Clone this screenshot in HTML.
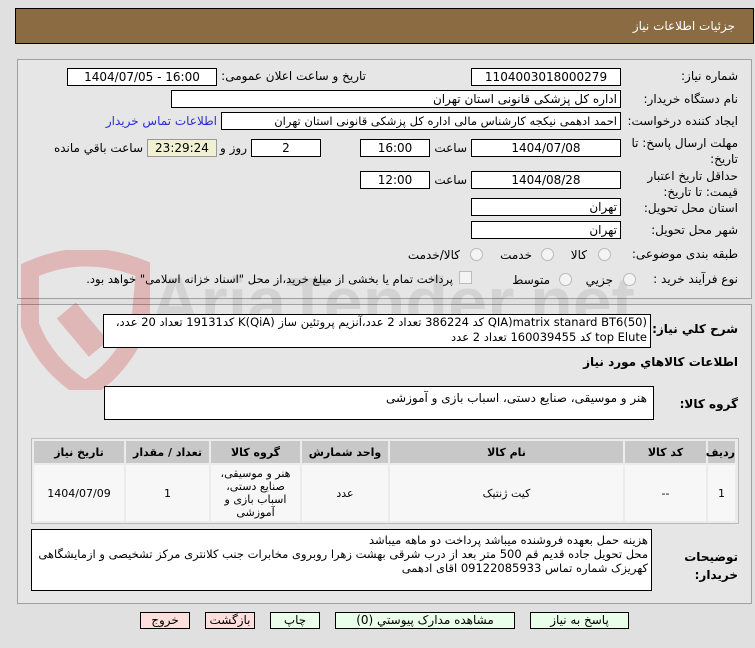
<!DOCTYPE html>
<html><head><meta charset="utf-8"><style>
body{margin:0;width:755px;height:648px;background:#e0e0e0;font-family:"DejaVu Sans",Tahoma,sans-serif;font-size:12px;color:#000;position:relative;overflow:hidden}
.a{position:absolute}
.hdr{left:15px;top:8px;width:737px;height:34px;background:#8b6b42;border:1px solid #000}
.hdr span{position:absolute;right:18px;top:10px;color:#fff;font-size:12px}
.pn{border:1px solid #a0a0a0;background:#e6e6e6}
.bx{position:absolute;background:#fff;border:1px solid #000;box-sizing:border-box;font-size:12px;line-height:16px;text-align:center;direction:ltr}
.r{text-align:right;direction:rtl;padding-right:3px}
.lb{position:absolute;direction:rtl;text-align:right;font-size:12px;white-space:nowrap}
.rad{position:absolute;width:11px;height:11px;border:1px solid #bbb;border-radius:50%;background:#f4f4f4}
table{border-collapse:separate;border-spacing:2px;font-size:11px;table-layout:fixed}
td,th{text-align:center;direction:rtl;padding:0}
th{background:#c8c8c8;height:22px;font-weight:bold}
td{background:#f7f7f7;height:56px;line-height:13px}
.bt{position:absolute;top:612px;height:17px;box-sizing:border-box;border:1px solid #000;font-size:12px;line-height:15px;text-align:center;direction:rtl}
.g{background:#eaffea}.p{background:#ffdede}
</style></head><body>
<div class="a hdr"><span>جزئیات اطلاعات نیاز</span></div>

<div class="a pn" style="left:17px;top:59px;width:733px;height:238px"></div>
<div class="a pn" style="left:17px;top:304px;width:733px;height:298px"></div>

<svg class="a" style="left:20px;top:250px;opacity:.2" width="130" height="140" viewBox="0 0 130 140"><path d="M10 20 Q65 -5 125 20 L120 75 Q100 120 65 140 Q25 115 10 75 Z" fill="none" stroke="#c00" stroke-width="18"/><rect x="50" y="55" width="25" height="50" fill="#c00" transform="rotate(-40 62 80)"/></svg>
<div class="a" style="left:150px;top:262px;font-size:70px;font-weight:bold;color:#000;opacity:.08;font-family:'Liberation Sans',sans-serif">AriaTender.net</div>

<div class="lb" style="right:17px;top:69px">شماره نیاز:</div>
<div class="bx" style="left:471px;top:68px;width:150px;height:18px">1104003018000279</div>
<div class="lb" style="right:389px;top:69px">تاریخ و ساعت اعلان عمومی:</div>
<div class="bx" style="left:67px;top:68px;width:150px;height:18px">1404/07/05 - 16:00</div>

<div class="lb" style="right:17px;top:92px">نام دستگاه خریدار:</div>
<div class="bx r" style="left:171px;top:90px;width:450px;height:18px">اداره کل پزشکی قانونی استان تهران</div>

<div class="lb" style="right:17px;top:114px">ایجاد کننده درخواست:</div>
<div class="bx r" style="left:221px;top:112px;width:400px;height:18px;font-size:11.5px">احمد ادهمی نیکجه کارشناس مالی اداره کل پزشکی قانونی استان تهران</div>
<div class="lb" style="right:538px;top:114px;color:#2a2ad8">اطلاعات تماس خریدار</div>

<div class="lb" style="right:17px;top:135px;line-height:16px">مهلت ارسال پاسخ: تا<br>تاریخ:</div>
<div class="bx" style="left:471px;top:139px;width:150px;height:18px">1404/07/08</div>
<div class="lb" style="right:288px;top:141px">ساعت</div>
<div class="bx" style="left:360px;top:139px;width:70px;height:18px">16:00</div>
<div class="bx" style="left:251px;top:139px;width:70px;height:18px">2</div>
<div class="lb" style="right:508px;top:141px">روز و</div>
<div class="bx" style="left:147px;top:139px;width:70px;height:18px;background:#f1f0d2;border-color:#999">23:29:24</div>
<div class="lb" style="right:612px;top:141px">ساعت باقي مانده</div>

<div class="lb" style="right:17px;top:168px;line-height:16px">حداقل تاریخ اعتبار<br>قیمت: تا تاریخ:</div>
<div class="bx" style="left:471px;top:171px;width:150px;height:18px">1404/08/28</div>
<div class="lb" style="right:288px;top:173px">ساعت</div>
<div class="bx" style="left:360px;top:171px;width:70px;height:18px">12:00</div>

<div class="lb" style="right:17px;top:201px">استان محل تحویل:</div>
<div class="bx r" style="left:471px;top:198px;width:150px;height:18px">تهران</div>
<div class="lb" style="right:17px;top:223px">شهر محل تحویل:</div>
<div class="bx r" style="left:471px;top:221px;width:150px;height:18px">تهران</div>

<div class="lb" style="right:17px;top:247px">طبقه بندی موضوعی:</div>
<div class="rad" style="left:598px;top:248px"></div><div class="lb" style="right:168px;top:248px">کالا</div>
<div class="rad" style="left:541px;top:248px"></div><div class="lb" style="right:223px;top:248px">خدمت</div>
<div class="rad" style="left:470px;top:248px"></div><div class="lb" style="right:295px;top:248px">کالا/خدمت</div>

<div class="lb" style="right:17px;top:272px">نوع فرآیند خرید :</div>
<div class="rad" style="left:623px;top:273px"></div><div class="lb" style="right:142px;top:273px">جزیي</div>
<div class="rad" style="left:559px;top:273px"></div><div class="lb" style="right:205px;top:273px">متوسط</div>
<div class="a" style="left:459px;top:271px;width:11px;height:11px;border:1px solid #bbb;background:#f4f4f4"></div>
<div class="lb" style="right:302px;top:272px;font-size:11.5px">پرداخت تمام یا بخشی از مبلغ خرید،از محل "اسناد خزانه اسلامی" خواهد بود.</div>

<div class="lb" style="right:17px;top:322px;font-weight:bold">شرح کلي نیاز:</div>
<div class="bx r" style="left:103px;top:314px;width:548px;height:34px;line-height:15px;font-size:11.5px;background:#fff">(50)QIA)matrix stanard BT6 کد 386224 تعداد 2 عدد،آنزیم پروتئین ساز K(QiA) کد19131 تعداد 20 عدد، top Elute کد 160039455 تعداد 2 عدد</div>

<div class="lb" style="right:17px;top:355px;font-weight:bold">اطلاعات کالاهاي مورد نیاز</div>

<div class="lb" style="right:17px;top:397px;font-weight:bold">گروه کالا:</div>
<div class="bx r" style="left:104px;top:386px;width:550px;height:34px;padding-right:6px;padding-top:3px">هنر و موسیقی، صنایع دستی، اسباب بازی و آموزشی</div>

<div class="a" style="left:31px;top:438px;width:706px;height:84px;border:1px solid #bbb;background:#ececec">
<table style="width:705px;direction:rtl;margin:0">
<tr><th style="width:27px">ردیف</th><th style="width:81px">کد کالا</th><th style="width:233px">نام کالا</th><th style="width:86px">واحد شمارش</th><th style="width:89px">گروه کالا</th><th style="width:83px">تعداد / مقدار</th><th style="width:90px">تاریخ نیاز</th></tr>
<tr><td>1</td><td>--</td><td>کیت ژنتیک</td><td>عدد</td><td>هنر و موسیقی، صنایع دستی، اسباب بازی و آموزشی</td><td>1</td><td>1404/07/09</td></tr>
</table></div>

<div class="lb" style="right:17px;top:548px;font-weight:bold;line-height:18px">توضیحات<br>خریدار:</div>
<div class="bx r" style="left:31px;top:529px;width:621px;height:62px;line-height:14px;font-size:11.5px;padding-top:3px">هزینه حمل بعهده فروشنده میباشد پرداخت دو ماهه میباشد<br>محل تحویل جاده قدیم قم 500 متر بعد از درب شرقی بهشت زهرا روبروی مخابرات جنب کلانتری مرکز تشخیصی و ازمایشگاهی کهریزک شماره تماس 09122085933 اقای ادهمی</div>

<div class="bt g" style="left:530px;width:99px">پاسخ به نیاز</div>
<div class="bt g" style="left:335px;width:180px">مشاهده مدارک پیوستي (0)</div>
<div class="bt g" style="left:270px;width:50px">چاپ</div>
<div class="bt p" style="left:205px;width:50px">بازگشت</div>
<div class="bt p" style="left:140px;width:50px">خروج</div>
</body></html>
